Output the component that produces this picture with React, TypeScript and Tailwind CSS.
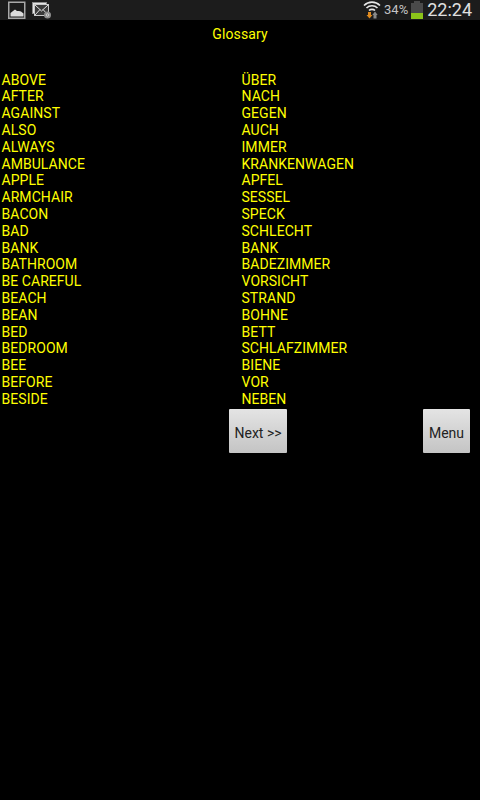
const WORDS = [
  ['ABOVE', 'ÜBER'],
  ['AFTER', 'NACH'],
  ['AGAINST', 'GEGEN'],
  ['ALSO', 'AUCH'],
  ['ALWAYS', 'IMMER'],
  ['AMBULANCE', 'KRANKENWAGEN'],
  ['APPLE', 'APFEL'],
  ['ARMCHAIR', 'SESSEL'],
  ['BACON', 'SPECK'],
  ['BAD', 'SCHLECHT'],
  ['BANK', 'BANK'],
  ['BATHROOM', 'BADEZIMMER'],
  ['BE CAREFUL', 'VORSICHT'],
  ['BEACH', 'STRAND'],
  ['BEAN', 'BOHNE'],
  ['BED', 'BETT'],
  ['BEDROOM', 'SCHLAFZIMMER'],
  ['BEE', 'BIENE'],
  ['BEFORE', 'VOR'],
  ['BESIDE', 'NEBEN'],
];

function PictureIcon() {
  return (
    <svg width="18" height="18" viewBox="0 0 18 18" className="ml-2">
      <rect x="0.75" y="1.25" width="16" height="16" fill="none" stroke="#a8a8a8" strokeWidth="1.5" />
      <path d="M2.5 15.5 V12 L5 10 L7 8.5 L9 10 L11 10 L13 10.5 L15.5 12.5 V15.5 Z" fill="#dcdcdc" />
    </svg>
  );
}

function MailIcon() {
  return (
    <svg width="20" height="17" viewBox="0 0 20 17" className="ml-[6px]">
      <rect x="0.5" y="0.5" width="14" height="11" fill="#e4e4e4" stroke="#8a8a8a" />
      <rect x="2.5" y="2.5" width="14" height="11" fill="#3a3a3a" stroke="#c8c8c8" />
      <path d="M3 3 L9.5 9 L16 3 M3 13 L8 7.5 M16 13 L11 7.5" fill="none" stroke="#e0e0e0" strokeWidth="1" />
      <circle cx="15.5" cy="13" r="3.5" fill="#8c8c8c" />
      <circle cx="15.5" cy="13" r="1.3" fill="none" stroke="#d8d8d8" strokeWidth="0.8" />
    </svg>
  );
}

function WifiIcon() {
  return (
    <svg width="18" height="18" viewBox="0 0 18 18">
      <path d="M1 4.5 C5.5 0 12.5 0 17 4.5" fill="none" stroke="#e6e6e6" strokeWidth="1.6" />
      <path d="M3.5 7 C6.5 4 11.5 4 14.5 7" fill="none" stroke="#e6e6e6" strokeWidth="1.6" />
      <path d="M6 9.5 C7.5 8 10.5 8 12 9.5" fill="none" stroke="#e6e6e6" strokeWidth="1.6" />
      <path d="M5 11 H8 V14 H9.5 L6.5 17.5 L3.5 14 H5 Z" fill="#e08a1e" />
      <path d="M10.5 17.5 V14 H9.3 L12 10.5 L14.7 14 H13.5 V17.5 Z" fill="#8a8a8a" />
    </svg>
  );
}

function BatteryIcon() {
  return (
    <div className="ml-[3px] flex h-[18px] w-3 flex-col items-center">
      <div className="h-[2px] w-[6px] bg-[#4a4a4a]" />
      <div className="flex w-3 flex-1 flex-col justify-end bg-[#4a4a4a]">
        <div className="h-[6px] bg-[#8cc41a]" />
      </div>
    </div>
  );
}

function GrayButton({ label, className }: { label: string; className: string }) {
  return (
    <button
      className={`flex h-[44px] items-center justify-center rounded-[1px] bg-gradient-to-b from-[#e4e4e4] to-[#c4c4c4] pt-[5px] text-[14px] text-[#222] ${className}`}
    >
      {label}
    </button>
  );
}

export default function App() {
  return (
    <div className="h-[800px] w-[480px] overflow-hidden bg-black font-['Roboto',sans-serif]">
      <div className="flex h-5 items-center bg-[#1c1c1c]">
        <PictureIcon />
        <MailIcon />
        <div className="ml-auto flex items-center pr-2">
          <WifiIcon />
          <span className="ml-[3px] text-[13px] text-[#c4c4c4]">34%</span>
          <BatteryIcon />
          <span className="ml-[4px] text-[18px] leading-5 text-[#e0e0e0]">22:24</span>
        </div>
      </div>

      <div className="pt-[6px] text-center text-[14px] leading-[17px] tracking-[0.1px] text-[#ffff00]">Glossary</div>

      <div className="mt-[28.7px] pl-[1.5px] text-[14px] leading-[16.8px] tracking-[0.05px] text-[#ffff00]">
        {WORDS.map(([en, de]) => (
          <div key={en} className="grid grid-cols-[240px_1fr]">
            <span>{en}</span>
            <span>{de}</span>
          </div>
        ))}
      </div>

      <div className="mt-[1.3px] flex pl-[229px]">
        <GrayButton label="Next >>" className="w-[58px]" />
        <GrayButton label="Menu" className="ml-[136px] w-[47px]" />
      </div>
    </div>
  );
}
